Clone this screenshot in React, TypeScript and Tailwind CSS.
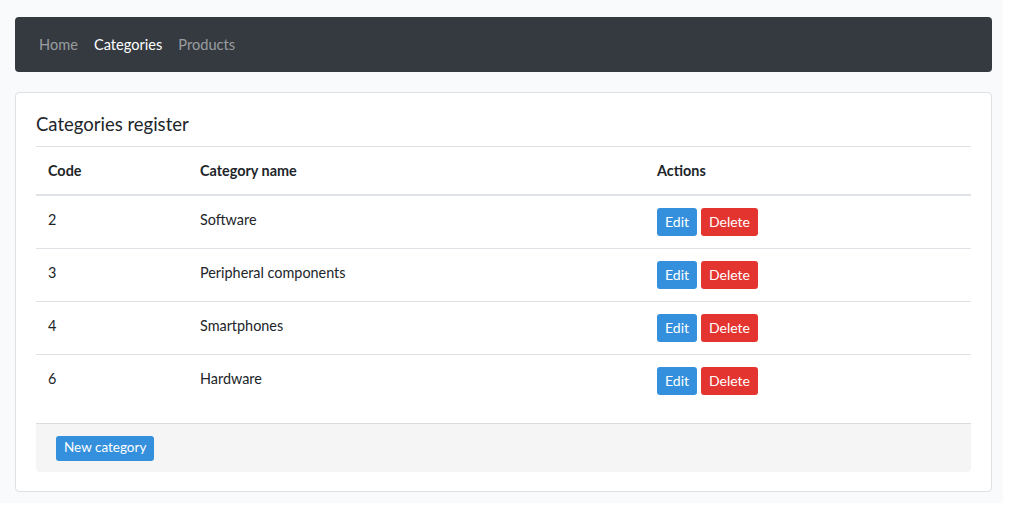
const categories = [
  { id: 2, name: 'Software' },
  { id: 3, name: 'Peripheral components' },
  { id: 4, name: 'Smartphones' },
  { id: 6, name: 'Hardware' },
]

export default function App() {
  return (
    <div className="min-h-[513px] bg-white font-['Lato',sans-serif] text-[14.4px] leading-[1.6] text-[#212529]">
      <div className="w-[1003px] h-[503px] bg-[#f8fafc] pl-[15px] pr-[11px] pt-[17px]">
        {/* Navbar */}
        <nav className="h-[55px] rounded-[4px] bg-[#343a40] flex items-center px-[16px] text-[14.6px]">
          <a className="px-[8px] text-white/50">Home</a>
          <a className="px-[8px] text-white">Categories</a>
          <a className="px-[8px] text-white/50">Products</a>
        </nav>

        {/* Card */}
        <section className="mt-[20px] h-[400px] rounded-[4px] border border-[#dfe0e1] bg-white p-[20px]">
          <h5 className="text-[18.5px] leading-[1.2] mb-[11px] text-[#212529]">Categories register</h5>
          <table className="w-full border-collapse mb-[16px]">
            <thead>
              <tr className="border-t border-[#dee2e6]">
                <th className="w-[152px] p-[12px] text-left font-bold border-b-2 border-[#dee2e6]">Code</th>
                <th className="w-[457px] p-[12px] text-left font-bold border-b-2 border-[#dee2e6]">Category name</th>
                <th className="p-[12px] text-left font-bold border-b-2 border-[#dee2e6]">Actions</th>
              </tr>
            </thead>
            <tbody>
              {categories.map((c) => (
                <tr key={c.id} className="border-t border-[#dee2e6] align-top">
                  <td className="p-[12px]">{c.id}</td>
                  <td className="p-[12px]">{c.name}</td>
                  <td className="p-[12px]">
                    <div className="flex gap-[4px]">
                      <button className="h-[28px] px-[8px] rounded-[3px] bg-[#3490dc] text-white text-[14px]">Edit</button>
                      <button className="h-[28px] px-[8px] rounded-[3px] bg-[#e3342f] text-white text-[14px]">Delete</button>
                    </div>
                  </td>
                </tr>
              ))}
            </tbody>
          </table>
          <div className="border-t border-[#dcdcdc] bg-[#f5f5f5] rounded-b-[4px] px-[20px] py-[11px]">
            <button className="h-[25px] px-[8px] rounded-[3px] bg-[#3490dc] text-white text-[13.5px]">New category</button>
          </div>
        </section>
      </div>
    </div>
  )
}
